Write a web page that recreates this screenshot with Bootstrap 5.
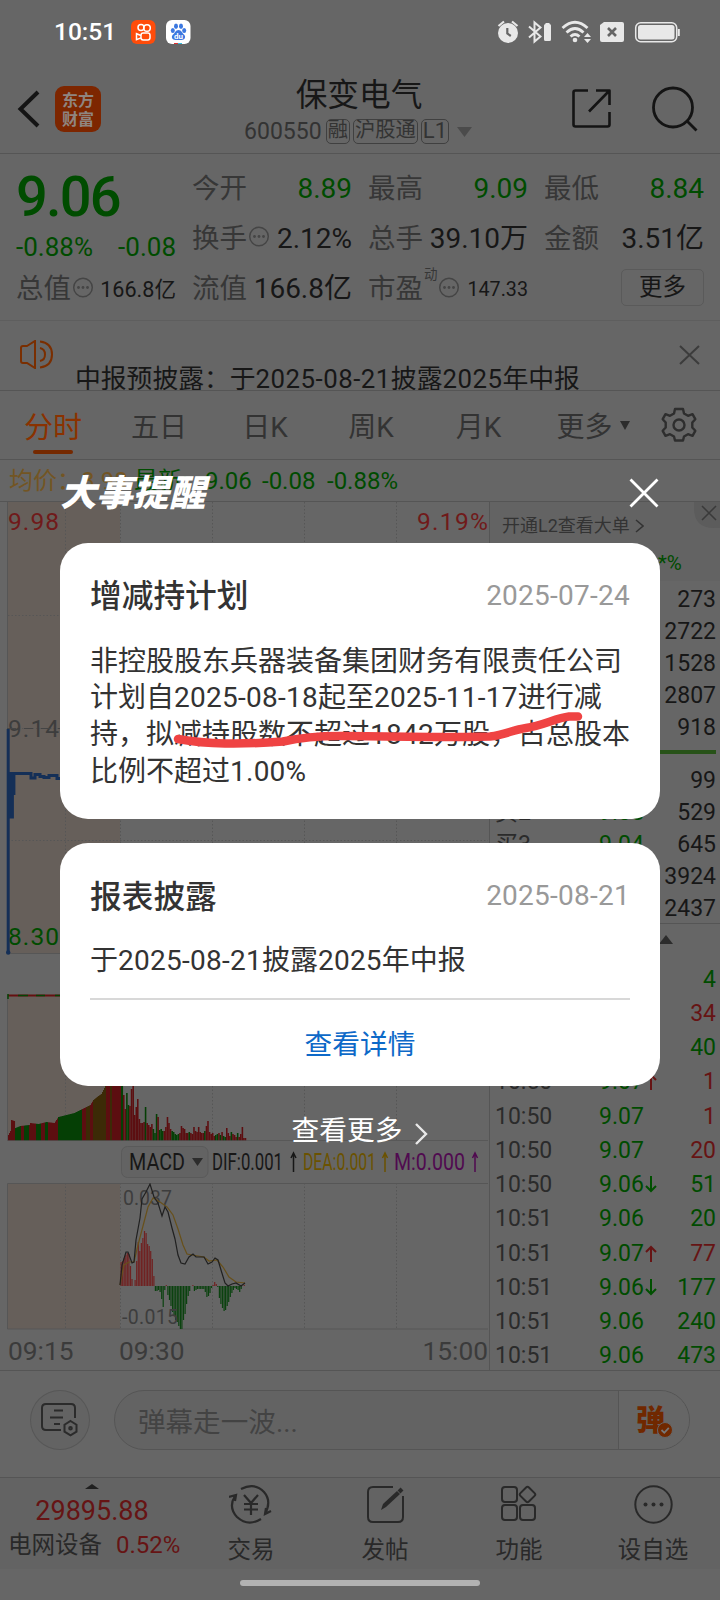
<!DOCTYPE html>
<html lang="zh-CN">
<head>
<meta charset="utf-8">
<meta name="viewport" content="width=device-width, initial-scale=1">
<title>保变电气 600550</title>
<link href="https://cdn.jsdelivr.net/npm/bootstrap@5.3.0/dist/css/bootstrap.min.css" rel="stylesheet">
<style>
  body{margin:0;background:#666;font-family:Roboto,"Noto Sans CJK SC",sans-serif;color:#171717;overflow:hidden}
  .screen{width:720px;height:1600px;background:#666;line-height:1;white-space:nowrap;overflow:hidden}
  .screen svg{display:block;flex:none}
  .c-g{color:#004c00}.c-r{color:#661414}.c-lab{color:#373737}
  .ln-b{border-bottom:1px solid #555}
  .statusbar{height:64px;padding:0 40px 0 54px}
  .clock{font-size:24.5px;font-weight:500;color:#fff;width:77px}
  .titlebar{height:90px;padding:0 22px 0 17px}
  .brand{width:46px;height:46px;border-radius:9px;background:#7d2600;color:#8f8580;font-family:"Noto Sans CJK SC",sans-serif;font-weight:700;font-size:16px;line-height:19px}
  .stock{font-size:31.7px;line-height:36px}
  .code{font-size:23px;color:#333;line-height:24px}
  .tagbox{border:1.5px solid #404040;border-radius:5px;height:25px;font-size:20.3px;line-height:21px;padding:0 1px}
  .quote{height:167px;padding:10px 16px 0;column-gap:16px;grid-template-columns:repeat(4,160px);border-bottom:1px solid #5e5e5e}
  .qrow{height:50px;font-size:27.5px}
  .qrow .val{font-size:28px}
  .big{font-size:56px;font-weight:500;height:56px;line-height:58px;letter-spacing:-1.8px}
  .more{width:83px;height:37px;border:1.5px solid #5a5a5a;border-radius:5px;font-size:23.5px;padding-bottom:0}
  .notice{height:70px;padding:0 20px 0 20px;overflow:hidden}
  .notice p{font-size:25.8px;line-height:30px;margin:43px 0 0 22px}
  .notice .num{letter-spacing:.5px}
  .tabs{height:69px;grid-template-columns:repeat(5,106px) 126px 1fr;font-size:28px;color:#333}
  .tabs>div{padding-top:6px}
  .tabs .on{font-size:29px;color:#8a3200}
  .tabs .on i{left:33px;top:42px;width:40px;height:4px;border-radius:2px;background:#752900}
  .avg{height:42px;font-size:24px;padding-left:9px}
  .left{width:489px;height:868px}
  .side{width:231px;height:868px;border-left:1px solid #555}
  .l2{height:79px;background:#636363;font-size:18px;color:#333}
  .lv{height:32.2px;font-size:23px;padding:0 4px 0 5px}
  .tk{height:34.25px;font-size:23px;padding:0 4px 0 5px}
  .tk>:first-child,.lv>:first-child{width:104px;color:#2b2b2b}
  .tk>:nth-child(2),.lv>:nth-child(2){width:70px}
  .axis{height:39px;font-size:26.3px;color:#3b3b3b;padding:4px 1px 0 8px}
  .chat{height:107px;padding:0 30px 8px 30px}
  .round60{width:60px;height:60px;border:1px solid #575757;background:#636363;border-radius:50%}
  .pill{width:577px;height:60px;border:1px solid #555;border-radius:30px;background:#636363;margin-left:24px;font-size:27.6px;color:#434343;overflow:hidden}
  .pill .send{width:71px;height:60px;border-left:1px solid #555;background:#666;font-family:"Noto Sans CJK SC",sans-serif;font-weight:900;font-size:29px;color:#702800}
  .dock{height:91px;background:#636363;grid-template-columns:184px repeat(4,134px);font-size:23.5px;color:#292929}
  .home{width:240px;height:6px;border-radius:3px;background:#b2b2b2}
  .veil{inset:0;padding:465px 60px 0;color:#fff}
  .headline{height:78px;padding-bottom:23px}
  .headline h1{font:italic 900 36.3px "Noto Sans CJK SC",sans-serif;margin:-5px 0 0;line-height:52px}
  .sheet{background:#fff;color:#333;border-radius:28px;padding:0 30px;margin-bottom:24px}
  .sheet h2{font-size:31.7px;font-weight:500;margin:3px 0 0;line-height:36px}
  .sheet .when{font-size:28px;color:#999;letter-spacing:.25px}
  .sheet p{font-size:28px;line-height:36.7px;margin:0;padding-top:.5px}
  .sheet .num{letter-spacing:.25px}
  .detail{color:#0d69c8;font-size:27.7px;height:86px;border-top:2px solid #d8d8d8;padding-top:6px}
  .strike{left:170px;top:705px}
</style>
</head>
<body>
<div class="screen position-relative d-flex flex-column">

  <div class="statusbar d-flex align-items-center">
    <span class="clock">10:51</span>
    <svg width="60" height="26" viewBox="131 19 60 26">
      <rect x="131" y="20" width="24.500" height="24" rx="6" fill="#ff4c0a"/>
      <g fill="none" stroke="#fff" stroke-width="1.500"><circle cx="141" cy="27.500" r="3"/><circle cx="147" cy="28" r="3.300"/><rect x="141" y="33" width="9" height="7" rx="2.200"/><path d="M141 35.500l-4.500-1.800v6l4.500-1.800"/></g>
      <rect x="166" y="20" width="24.500" height="24" rx="6" fill="#fff"/>
      <g fill="#3c78e0"><ellipse cx="172.800" cy="30.500" rx="2" ry="2.600"/><ellipse cx="176" cy="26.300" rx="2" ry="2.700"/><ellipse cx="181" cy="26.300" rx="2" ry="2.700"/><ellipse cx="184.200" cy="30.500" rx="2" ry="2.600"/><path d="M178.500 30c3 0 3.500 3 5.500 4.500 2.500 2.500.5 5.500-2.500 5.500h-6c-3 0-5-3-2.500-5.500 2-1.500 2.500-4.500 5.500-4.500z"/></g>
      <text x="174" y="38.500" font-size="8" font-weight="700" fill="#fff">du</text>
      <path d="M174 43.500h4" stroke="#d33"/><path d="M178 43.500h4" stroke="#3bd"/>
    </svg>
    <svg class="ms-auto" width="183" height="26" viewBox="497 19 183 26" fill="#e8e8e8">
      <circle cx="508" cy="33" r="10"/><path d="M498.500 26l5.500-4.500M517.500 26l-5.500-4.500" stroke="#e8e8e8" stroke-width="2.200"/><path d="M507.300 28v5.500l3.500 2.500" fill="none" stroke="#666" stroke-width="2.200"/>
      <path d="M529 26.500l11.500 10-6 5v-19l6 5-11.500 10" fill="none" stroke="#e8e8e8" stroke-width="2"/><path d="M544 25.500q0-1.500 1.500-1.500v-1h4v1q1.500 0 1.500 1.500v14q0 1.500-1.500 1.500h-4q-1.500 0-1.500-1.500z"/>
      <g fill="none" stroke="#e8e8e8" stroke-width="2.800"><path d="M562.500 28q12.500-11.500 25 0"/><path d="M566.500 32.500q8.500-8 17 0"/><path d="M570.500 36.500q4.500-4 9 0"/></g><circle cx="575" cy="40" r="2.300"/><path d="M584 37l3.500-4 3.500 4zM584 39h7l-3.500 4z"/>
      <path d="M600 25l4-3h18q2 0 2 2v16q0 2-2 2h-20q-2 0-2-2z"/><path d="M608 28l8 8m0-8l-8 8" stroke="#666" stroke-width="2.600"/>
      <rect x="635.700" y="22.700" width="41" height="19" rx="5" fill="none" stroke="#e8e8e8" stroke-width="1.500"/><rect x="638" y="25" width="36.500" height="14.500" rx="2.500"/><path d="M678.800 29v7" stroke="#e8e8e8" stroke-width="2"/>
    </svg>
  </div>

  <div class="titlebar d-flex align-items-center ln-b">
    <svg width="23" height="38" viewBox="0 0 23 38" fill="none" stroke="#141414" stroke-width="4"><path d="M21 2L3.500 19l17.500 17"/></svg>
    <div class="brand text-center pt-1" style="margin-left:15px">东方<br>财富</div>
    <div class="d-flex flex-column align-items-center ms-auto" style="padding-top:5px">
      <div class="stock" style="margin-left:2px">保变电气</div>
      <div class="code d-flex align-items-center" style="gap:3px;margin-top:5px"><span>600550</span><span class="tagbox" style="margin-left:1px">融</span><span class="tagbox">沪股通</span><span class="tagbox" style="font-size:22px">L1</span><svg style="margin-left:5px" width="15" height="10"><path d="M0 0h15L7.500 10z" fill="#4b4b4b"/></svg></div>
    </div>
    <svg style="margin-left:100px" width="39" height="39" viewBox="0 0 39 39" fill="none" stroke="#141414" stroke-width="2.600" stroke-linejoin="round"><path d="M16 1.500H3.500q-2 0-2 2v32q0 2 2 2h32q2 0 2-2V23M24 1.500h13.500V16M37 2L17 22.500"/></svg>
    <svg style="margin-left:41px" width="46" height="46" viewBox="0 0 46 46" fill="none" stroke="#141414" stroke-width="2.800"><circle cx="21" cy="21.500" r="19.500"/><path d="M34.500 34.500l10 10"/></svg>
  </div>

  <div class="quote d-grid">
    <div class="c-g">
      <div class="big" style="margin-top:4px">9.06</div>
      <div class="d-flex justify-content-between align-items-center" style="height:40px;font-size:26px;margin-top:3px"><span>-0.88%</span><span>-0.08</span></div>
      <div class="qrow d-flex align-items-center c-lab" style="margin-top:-3px">总值<svg width="22" height="22" style="margin:-3px 0 0 1px"><use href="#dots"/></svg><span class="ms-auto" style="font-size:21.600px;color:#171717;padding-top:2px">166.8亿</span></div>
    </div>
    <div>
      <div class="qrow d-flex align-items-center justify-content-between c-lab">今开<span class="val c-g">8.89</span></div>
      <div class="qrow d-flex align-items-center c-lab">换手<svg width="22" height="22" style="margin:-4px 0 0 1px"><use href="#dots"/></svg><span class="val ms-auto" style="color:#171717">2.12%</span></div>
      <div class="qrow d-flex align-items-center justify-content-between c-lab">流值<span class="val" style="color:#171717">166.8亿</span></div>
    </div>
    <div>
      <div class="qrow d-flex align-items-center justify-content-between c-lab">最高<span class="val c-g">9.09</span></div>
      <div class="qrow d-flex align-items-center justify-content-between c-lab">总手<span class="val" style="color:#171717">39.10万</span></div>
      <div class="qrow d-flex align-items-center c-lab">市盈<span class="align-self-start" style="font-size:13.500px;padding:4px 0 0 1px">动</span><svg width="22" height="22" style="margin-top:-3px"><use href="#dots"/></svg><span class="ms-auto" style="font-size:19.700px;color:#171717;padding-top:2px">147.33</span></div>
    </div>
    <div>
      <div class="qrow d-flex align-items-center justify-content-between c-lab">最低<span class="val c-g">8.84</span></div>
      <div class="qrow d-flex align-items-center justify-content-between c-lab">金额<span class="val" style="color:#171717">3.51亿</span></div>
      <div class="qrow d-flex align-items-center justify-content-end" style="padding-bottom:3px"><div class="more d-flex align-items-center justify-content-center">更多</div></div>
    </div>
  </div>

  <div class="notice d-flex ln-b">
    <svg style="margin-top:19px" width="33" height="29" viewBox="0 0 33 29" fill="none" stroke="#7a2e00" stroke-width="2"><path d="M7 6L15 1v27l-8-5H3q-2 0-2-2V8q0-2 2-2zM20 8q5 1 5 6.500T20 21M20 1.500q12 1.500 12 13T20 27.500"/></svg>
    <p>中报预披露：于<span class="num">2025-08-21</span>披露<span class="num">2025</span>年中报</p>
    <svg class="ms-auto" style="margin-top:24px" width="21" height="20" fill="none" stroke="#3c3c3c" stroke-width="2"><path d="M1 1l19 18M20 1L1 19"/></svg>
  </div>

  <div class="tabs d-grid align-items-center text-center ln-b">
    <div class="on position-relative">分时<i class="position-absolute"></i></div>
    <div>五日</div><div>日K</div><div>周K</div><div style="padding-left:3px">月K</div>
    <div class="d-flex align-items-center justify-content-center">更多<svg style="margin:-6px 0 0 7px" width="10" height="9"><path d="M0 0h10L5 9z" fill="#2c2c2c"/></svg></div>
    <svg style="margin-left:5px" width="36" height="36" viewBox="-18 -18 36 36" fill="none" stroke="#2e2e2e" stroke-width="2.400" stroke-linejoin="round"><circle r="5.500"/><path d="M-4 -16h8l1 4.500 4 2.300 4.500-1.600 2.800 5-3 3.300v5l3 3.300-2.800 5-4.500-1.600-4 2.300-1 4h-8l-1-4-4-2.300-4.500 1.600-2.800-5 3-3.300v-5l-3-3.300 2.800-5 4.500 1.600 4-2.300z"/></svg>
  </div>

  <div class="avg d-flex align-items-center ln-b c-g">
    <span style="color:#735523;width:125px">均价：8.98</span><span style="width:71px">最新:</span><span style="width:57px">9.06</span><span style="width:65px">-0.08</span><span>-0.88%</span>
  </div>

  <div class="d-flex ln-b">
    <div class="left">
      <svg id="price" width="489" height="639" viewBox="0 502 489 639">
        <rect x="8" y="502" width="112" height="451" fill="#665f5a"/><rect x="8" y="995" width="112" height="146" fill="#665f5a"/>
        <g fill="none" stroke="#565656"><path d="M7.500 502V953.500H488M7.500 995v146M7 995.500h481"/><path stroke-dasharray="1.500 2" d="M65.500 502v451M120.500 502v451M212.500 502v451M304.500 502v451M396.500 502v451M8 615.500h480M8 728.500h480M8 840.500h480M65.500 995v146M120.500 995v146M212.500 995v146M304.500 995v146M396.500 995v146"/></g>
        <g font-size="24.500"><text x="8" y="530" fill="#701a1a" textLength="51">9.98</text><text x="417" y="530" fill="#701a1a" textLength="71">9.19%</text><text x="8" y="737" fill="#3d3d3d" textLength="51">9.14</text><text x="8" y="945" fill="#004c00" textLength="51">8.30</text></g>
        <path d="M7 728.500h53" stroke="#444" stroke-dasharray="9 8"/>
        <g fill="none" stroke="#142f57" stroke-width="3"><path d="M8.200 729v224M9 773.500h22v4.500h4v-3.500h5v2h4v1h5v-2h8v3h4"/><path d="M10 773v44h2.500V774M14 795v-20" stroke-width="2.800"/></g><circle cx="8.200" cy="952.500" r="2.200" fill="#142f57"/>
        <path d="M8 995.500h52" stroke="#651010" stroke-width="2"/><path d="M8 994v5M18 995.500h10M36 995.500h9M55 995.500h6" stroke="#044404" stroke-width="1.500"/>
        <g id="vol"></g><path d="M8 1141h480" stroke="#555" stroke-width="1.500"/>
      </svg>
      <svg width="489" height="42" viewBox="0 1141 489 42" font-size="24">
        <rect x="121.500" y="1146.500" width="86.500" height="31" rx="6" fill="#636363" stroke="#5a5a5a"/>
        <text x="129" y="1170" textLength="56" lengthAdjust="spacingAndGlyphs" fill="#171717">MACD</text><path d="M192 1158h11l-5.500 8z" fill="#2c2c2c"/>
        <text x="212" y="1170" textLength="71" lengthAdjust="spacingAndGlyphs" fill="#171717">DIF:0.001</text><text x="303" y="1170" textLength="73" lengthAdjust="spacingAndGlyphs" fill="#6b5200">DEA:0.001</text><text x="394" y="1170" textLength="71" lengthAdjust="spacingAndGlyphs" fill="#500a50">M:0.000</text>
        <g stroke-width="1.500" fill="none"><path stroke="#171717" d="M293.500 1172v-19m-2.500 5l2.500-5 2.500 5"/><path stroke="#6b5200" d="M385 1172v-19m-2.500 5l2.500-5 2.500 5"/><path stroke="#500a50" d="M475 1172v-19m-2.500 5l2.500-5 2.500 5"/></g>
      </svg>
      <svg width="489" height="147" viewBox="0 1183 489 147">
        <rect x="8" y="1183" width="112" height="146" fill="#665f5a"/>
        <g fill="none" stroke="#565656"><path d="M488 1183.500H7.500V1329H488"/><path stroke-dasharray="1.500 2" d="M65.500 1183v146M120.500 1183v146M212.500 1183v146M304.500 1183v146M396.500 1183v146"/></g>
        <g id="macd"></g>
        <g font-size="19.500" fill="#3d3d3d"><text x="123" y="1205" textLength="49">0.037</text><text x="122" y="1324" textLength="56">-0.015</text></g>
        <path d="M120 1285L124 1265L129 1262L134 1262L138 1245L143 1226L148 1207L153 1198L160 1202L167 1207L173 1215L178 1229L183 1245L187 1254L192 1255L204 1257L209 1261L217 1260L223 1267L229 1277L236 1282L245 1283" fill="none" stroke="#68501a" stroke-width="1.200"/>
        <path d="M120 1285L122 1265L126 1252L128 1252L132 1263L134 1262L136 1240L140 1218L142 1199L146 1192L150 1184L154 1197L158 1203L162 1216L165 1207L168 1212L172 1228L175 1239L178 1255L181 1263L185 1264L189 1257L193 1254L196 1257L204 1257L208 1264L212 1262L215 1258L218 1260L221 1270L225 1283L228 1286L232 1284L236 1283L241 1286L245 1283" fill="none" stroke="#202020" stroke-width="1.200"/>
      </svg>
      <div class="axis d-flex align-items-center"><span style="width:111px">09:15</span><span>09:30</span><span class="ms-auto">15:00</span></div>
    </div>

    <div class="side">
      <div class="l2 position-relative">
        <div class="d-flex align-items-center" style="height:46px;padding:2px 0 0 12px">开通L2查看大单<svg style="margin-left:5px" width="9" height="14" fill="none" stroke="#333" stroke-width="1.500"><path d="M1 1l7 6-7 6"/></svg></div>
        <svg class="position-absolute top-0 end-0" width="26" height="26"><path d="M0 0h26v26H20Q0 26 0 6z" fill="#5c5c5c"/><path d="M8 4l14 14M22 4L8 18" stroke="#3a3a3a" stroke-width="1.500"/></svg>
        <div class="c-g" style="font-size:20.500px;padding:5px 0 0 168px">*%</div>
      </div>
      <div style="height:166px;padding-top:2px" id="asks"></div>
      <div style="height:6px;margin-right:4px"><div style="height:4px;background:#275218;margin-top:3px"></div></div>
      <div style="height:168px;padding-top:8px;border-bottom:1px solid #555" id="bids"></div>
      <div style="height:38px;padding:11px 0 0 169px"><svg width="14" height="9"><path d="M0 9L7 0l7 9z" fill="#2c2c2c"/></svg></div>
      <div id="ticks"></div>
    </div>
  </div>

  <div class="chat d-flex align-items-center ln-b">
    <div class="round60 d-flex align-items-center justify-content-center"><svg width="37" height="34" viewBox="0 0 37 34" fill="none" stroke="#2b2b2b" stroke-width="2"><path d="M20 27H5q-4 0-4-4V5q0-4 4-4h25q4 0 4 4v10M13 7.500h9M9 14.500h13M13 21h6M29.500 18l6 3.700v7l-6 3.700-6-3.700v-7z"/><circle cx="29.500" cy="25.200" r="1.300"/></svg></div>
    <div class="pill d-flex align-items-center"><span style="padding:5px 0 0 23px">弹幕走一波...</span>
      <div class="send ms-auto position-relative d-flex align-items-center"><span style="padding:0 0 3px 17px">弹</span><svg class="position-absolute" style="left:38px;top:32px" width="16" height="16"><circle cx="8" cy="8" r="7.500" fill="#702800" stroke="#666"/><path d="M4.500 8l2.800 2.800 4.500-5" stroke="#777" stroke-width="1.800" fill="none"/></svg></div>
    </div>
  </div>

  <div class="dock d-grid text-center">
    <div class="d-flex flex-column align-items-center"><svg style="margin-top:6px" width="14" height="5"><path d="M0 5l7-5 7 5z" fill="#202020"/></svg><div class="c-r" style="font-size:27px;margin:9px 0 8px">29895.88</div><div class="align-self-start" style="padding-left:8px">电网设备<span class="c-r" style="font-size:24px;margin-left:14px">0.52%</span></div></div>
    <div><svg class="mx-auto" style="margin-top:7px" width="44" height="40" viewBox="0 0 44 40" fill="none" stroke="#292929" stroke-width="2.200"><path d="M12 4Q26-3 35 7q8 9 1 22M32 34Q19 42 8 32-1 22 6 11M0 12l7-2-1 6M42 26l-6 3 1-6M15 10l7 8 7-8M22 18v12M15 19h14M15 24.500h14"/></svg><div style="margin-top:14px">交易</div></div>
    <div><svg class="mx-auto" style="margin:8px 0 0" width="37" height="37" viewBox="0 0 37 37" fill="none" stroke="#292929" stroke-width="2"><path d="M26 1H6Q1 1 1 6v25q0 5 5 5h25q5 0 5-5V10"/><path d="M14 24l2-6L30 5l3 3-14 13z" fill="#292929" stroke="none"/><path d="M32 6l3-3" stroke-width="4"/></svg><div style="margin-top:16px">发帖</div></div>
    <div><svg class="mx-auto" style="margin-top:7px" width="36" height="37" viewBox="0 0 36 37" fill="none" stroke="#292929" stroke-width="2"><rect x="1" y="2" width="15" height="15" rx="3"/><rect x="1" y="20" width="15" height="15" rx="3"/><rect x="19" y="20" width="15" height="15" rx="3"/><rect x="20.500" y="3.500" width="12" height="12" rx="2" transform="rotate(45 26.500 9.500)"/></svg><div style="margin-top:17px">功能</div></div>
    <div><svg class="mx-auto" style="margin-top:7px" width="39" height="39" viewBox="0 0 39 39"><circle cx="19.500" cy="19.500" r="18.200" fill="none" stroke="#292929" stroke-width="2"/><g fill="#292929"><circle cx="11.500" cy="19.500" r="2"/><circle cx="19.500" cy="19.500" r="2"/><circle cx="27.500" cy="19.500" r="2"/></g></svg><div style="margin-top:15px">设自选</div></div>
  </div>
  <div class="home mx-auto" style="margin-top:11px"></div>

  <div class="veil position-absolute">
    <div class="headline d-flex align-items-center justify-content-between">
      <h1>大事提醒</h1>
      <svg style="margin-right:1px" width="30" height="30" fill="none" stroke="#fff" stroke-width="2.800"><path d="M1.500 1.500l27 27M28.500 1.500l-27 27"/></svg>
    </div>
    <div class="sheet" style="height:276px">
      <div class="d-flex align-items-center justify-content-between" style="height:100px;padding-top:5px"><h2>增减持计划</h2><span class="when">2025-07-24</span></div>
      <p>非控股股东兵器装备集团财务有限责任公司<br>计划自<span class="num">2025-08-18</span>起至<span class="num">2025-11-17</span>进行减<br>持，拟减持股数不超过<span class="num">1842</span>万股，占总股本<br>比例不超过<span class="num">1.00%</span></p>
    </div>
    <div class="sheet" style="height:243px">
      <div class="d-flex align-items-center justify-content-between" style="height:99px;padding-top:7px"><h2>报表披露</h2><span class="when">2025-08-21</span></div>
      <p style="height:56px">于<span class="num">2025-08-21</span>披露<span class="num">2025</span>年中报</p>
      <div class="detail d-flex align-items-center justify-content-center">查看详情</div>
    </div>
    <div class="d-flex align-items-center justify-content-center" style="font-size:27.700px;height:42px">查看更多<svg style="margin:5px 0 0 13px" width="13" height="22" fill="none" stroke="#e8e8e8" stroke-width="2.400"><path d="M1 1l10 10L1 21"/></svg></div>
  </div>
  <svg class="strike position-absolute" width="420" height="50" viewBox="170 705 420 50" fill="none" stroke="#ef4343" stroke-width="8.500" stroke-linecap="round" stroke-linejoin="round"><path d="M178 739Q200 743 225 743.500T283 741.500Q310 735.500 345 736T430 737Q470 737 490 736.500C505 735 512 730 526 728C542 726 556 718 569 716.500H578"/></svg>
</div>

<svg width="0" height="0" class="position-absolute"><symbol id="dots" viewBox="0 0 22 22"><circle cx="11" cy="10.500" r="9.300" fill="none" stroke="#454545" stroke-width="1.500"/><g fill="#454545"><circle cx="6.500" cy="10.500" r="1.400"/><circle cx="11" cy="10.500" r="1.400"/><circle cx="15.500" cy="10.500" r="1.400"/></g></symbol></svg>

<script src="https://cdn.jsdelivr.net/npm/bootstrap@5.3.0/dist/js/bootstrap.bundle.min.js"></script>
<script>
  const byId = id => document.getElementById(id);
  const level = ([name, price, n]) => `<div class="lv d-flex align-items-center"><span class="c-lab">${name}</span><span class="c-g">${price}</span><span class="ms-auto">${n}</span></div>`;
  byId('asks').innerHTML = [['','',273],['','',2722],['','',1528],['','',2807],['','',918]].map(level).join('');
  byId('bids').innerHTML = [['','',99],['买2','9.05',529],['买3','9.04',645],['','',3924],['','',2437]].map(level).join('');

  const arrow = d => d ? `<svg style="margin-left:1px" width="12" height="17" fill="none" stroke-width="2" stroke="${d > 0 ? '#661414' : '#005000'}"><path d="${d > 0 ? 'M6 17V2M1 7l5-5 5 5' : 'M6 0v15M1 10l5 5 5-5'}"/></svg>` : '';
  const ticks = [['','',0,4,'g'],['','',0,34,'r'],['','',0,40,'g'],['10:50','9.07',1,1,'r'],['10:50','9.07',0,1,'r'],['10:50','9.07',0,20,'r'],['10:50','9.06',-1,51,'g'],['10:51','9.06',0,20,'g'],['10:51','9.07',1,77,'r'],['10:51','9.06',-1,177,'g'],['10:51','9.06',0,240,'g'],['10:51','9.06',0,473,'g']];
  byId('ticks').innerHTML = ticks.map(([t, p, d, n, c]) => `<div class="tk d-flex align-items-center"><span>${t}</span><span class="c-g d-flex align-items-center">${p}${arrow(d)}</span><span class="ms-auto c-${c}">${n}</span></div>`).join('');

  const rect = (x, y, w, h, f) => `<rect x="${x}" y="${y}" width="${w}" height="${h}" fill="${f}"/>`;
  const R = '#5c0e10', G = '#053f05', M = '#3c2a06';
  /* opening auction: [x, height] knots and [from, to, colour] runs */
  const knots = [[8,6],[10,10],[11,21],[14,20],[15,13],[20,15],[29,16],[30,18],[38,17],[46,19],[54,18],[58,24],[66,26],[74,28],[82,32],[90,36],[93,41],[98,45],[101,47],[105,55],[124,57]];
  const runs = [[8,15,R],[15,21,G],[21,24,R],[24,29,G],[29,36,R],[36,41,G],[41,45,R],[45,48,G],[48,58,R],[58,82,G],[82,86,R],[86,90,M],[90,93,R],[93,106,M],[106,110,R],[110,112,M],[112,121,R],[121,123,G]];
  let out = '';
  for (let x = 8; x < 123; x++) {
    const i = knots.findIndex(k => k[0] > x), a = knots[i - 1], b = knots[i];
    const h = a[1] + (b[1] - a[1]) * (x - a[0]) / (b[0] - a[0]);
    out += rect(x, (1141 - h).toFixed(1), 1.05, h.toFixed(1), runs.find(r => x >= r[0] && x < r[1])[2]);
  }
  const vol = '46r 32r 48g 36g 35r 52r 55r 26r 34r 42r 22r 18r 18r 19r 34g 18r 16r 14r 17r 12g 8g 27g 24r 11g 12g 10g 10r 14r 24r 18r 12r 10g 9g 7g 6g 7g 8r 15r 13r 12r 8r 8r 9g 8r 7r 14r 10r 9r 14r 9r 8r 8r 10g 15r 20r 9r 7r 8r 5r 6g 7g 8r 6g 9r 5g 4g 13r 8r 5r 9g 7r 6r 4r 8g 4r 7r 14r 3r 3r'.split(' ');
  vol.forEach((v, i) => { const h = parseInt(v); out += rect((123 + i * 1.56).toFixed(1), 1141 - h, 1.56, h, v.endsWith('r') ? R : G); });
  byId('vol').innerHTML = out;

  const hist = [24,25,28,31,33,32,20,7,0,6,25,44,35,43,48,55,53,42,40,35,27,10,-5,-5,-4,-6,-13,-21,-4,1,-9,-14,-20,-26,-30,-34,-36,-40,-43,-43,-34,-28,-18,-10,-5,0,1,-5,-4,-3,-3,-3,-3,-3,-6,-11,-10,-7,-2,1,4,2,-1,-12,-18,-22,-25,-24,-20,-16,-11,-7,-4,-2,-3,-4,-6,-3,0,1];
  byId('macd').innerHTML = hist.map((v, i) => rect((120.5 + i * 1.56).toFixed(1), v > 0 ? 1286 - v : 1286, 1.2, Math.abs(v), v > 0 ? '#702222' : '#0b420f')).join('');
</script>
</body>
</html>
